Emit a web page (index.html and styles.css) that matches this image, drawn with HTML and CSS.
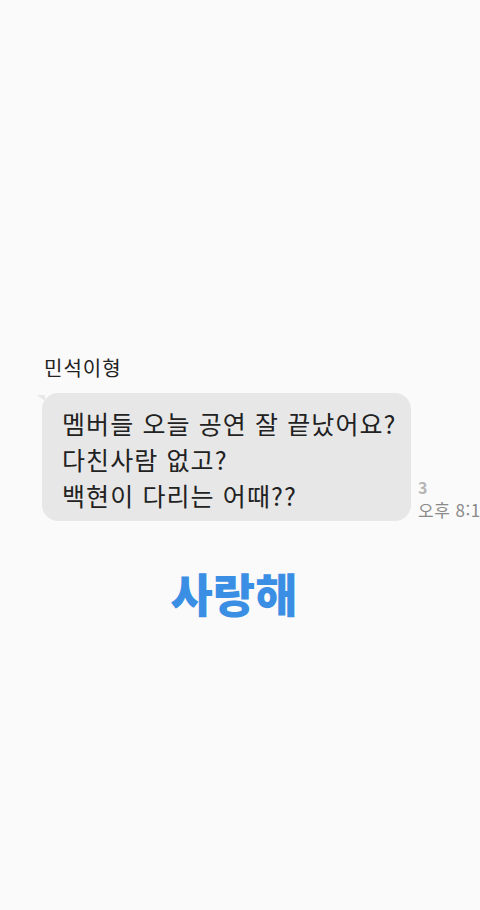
FILE: index.html
```html
<!DOCTYPE html>
<html lang="ko">
<head>
  <meta charset="UTF-8" />
  <meta name="viewport" content="width=device-width, initial-scale=1.0" />
  <title>민석이형</title>
  <link rel="stylesheet" href="styles.css">
</head>
<body>
  <div class="chat">
    <!-- Sender name -->
    <div class="sender">민석이형</div>

    <!-- Message row: bubble + unread count / time -->
    <div class="msg-row">
      <div class="bubble">
        멤버들 오늘 공연 잘 끝났어요?<br>
        다친사람 없고?<br>
        백현이 다리는 어때??
      </div>
      <div class="meta">
        <span class="unread">3</span>
        <span class="time">오후 8:14</span>
      </div>
    </div>
  </div>

  <p class="caption">사랑해</p>
</body>
</html>
```

FILE: styles.css
```css
/* Basic reset */
html, body {
  margin: 0;
  padding: 0;
}

body {
  background: #fafafa;
  font-family: "Noto Sans CJK KR", "Noto Sans", sans-serif;
  color: #222;
  width: 480px;
  height: 910px;
  overflow: hidden;
}

/* Chat area */
.chat {
  padding: 354px 0 0 42px;
}

.sender {
  font-size: 20px;
  letter-spacing: 1px;
  line-height: 28px;
  color: #222;
  padding-left: 2px;
  margin-bottom: 11px;
}

.msg-row {
  display: flex;
  align-items: flex-end;
  gap: 7px;
}

.bubble {
  position: relative;
  background: #e7e7e7;
  border-radius: 16px;
  padding: 12px 10px 8px 20px;
  width: 339px;
  font-size: 25px;
  letter-spacing: 1.1px;
  line-height: 36px;
  color: #222;
  flex-shrink: 0;
}

/* little tail at the top left */
.bubble::before {
  content: "";
  position: absolute;
  left: -5px;
  top: 2px;
  border-top: 6px solid #e7e7e7;
  border-left: 8px solid transparent;
}

.meta {
  display: flex;
  flex-direction: column;
  gap: 3px;
  white-space: nowrap;
}

.unread {
  font-size: 16px;
  font-weight: bold;
  color: #b5b5b5;
  line-height: 17px;
}

.time {
  font-size: 17px;
  letter-spacing: 0.5px;
  color: #8a8a8a;
  line-height: 22px;
}

/* Big blue caption */
.caption {
  margin: 40px 0 0;
  padding-right: 12px;
  text-align: center;
  font-size: 46px;
  font-weight: 900;
  color: #3a8fe4;
  line-height: 62px;
}
```
